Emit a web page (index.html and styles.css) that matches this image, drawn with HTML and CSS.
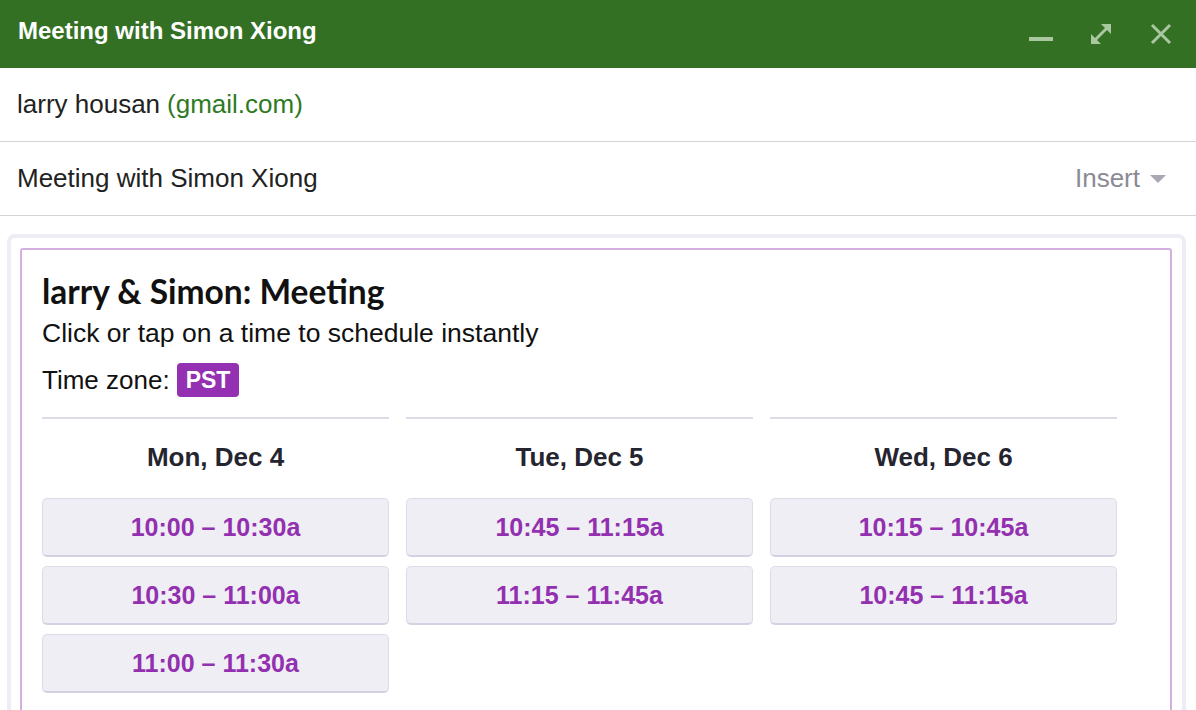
FILE: index.html
```html
<!DOCTYPE html>
<html lang="en">
<head>
    <meta charset="UTF-8">
    <meta name="viewport" content="width=device-width, initial-scale=1.0">
    <title>Meeting with Simon Xiong</title>
    <link rel="stylesheet" href="styles.css">
</head>
<body>

    <div class="compose">
        <div class="titlebar">
            <span class="title">Meeting with Simon Xiong</span>
            <div class="controls">
                <svg class="ctl" width="26" height="26" viewBox="0 0 26 26"><rect x="1" y="16" width="24" height="4" fill="currentColor"/></svg>
                <svg class="ctl" width="26" height="26" viewBox="0 0 26 26">
                    <path d="M6 20 L20 6" stroke="currentColor" stroke-width="3" fill="none"/>
                    <polygon points="13,3 23,3 23,13" fill="currentColor"/>
                    <polygon points="3,13 3,23 13,23" fill="currentColor"/>
                </svg>
                <svg class="ctl" width="26" height="26" viewBox="0 0 26 26"><path d="M4 4 L22 22 M22 4 L4 22" stroke="currentColor" stroke-width="3" fill="none"/></svg>
            </div>
        </div>

        <div class="field">larry housan <span class="domain">(gmail.com)</span></div>

        <div class="field subject">
            <span>Meeting with Simon Xiong</span>
            <span class="insert">Insert <span class="caret"></span></span>
        </div>

        <div class="frame">
            <div class="card">
                <h2>larry &amp; Simon: Meeting</h2>
                <p class="hint">Click or tap on a time to schedule instantly</p>
                <p class="tz">Time zone: <span class="badge">PST</span></p>

                <div class="days">
                    <div class="day">
                        <div class="day-name">Mon, Dec 4</div>
                        <button class="slot">10:00 – 10:30a</button>
                        <button class="slot">10:30 – 11:00a</button>
                        <button class="slot">11:00 – 11:30a</button>
                    </div>
                    <div class="day">
                        <div class="day-name">Tue, Dec 5</div>
                        <button class="slot">10:45 – 11:15a</button>
                        <button class="slot">11:15 – 11:45a</button>
                    </div>
                    <div class="day">
                        <div class="day-name">Wed, Dec 6</div>
                        <button class="slot">10:15 – 10:45a</button>
                        <button class="slot">10:45 – 11:15a</button>
                    </div>
                </div>
            </div>
        </div>
    </div>

</body>
</html>
```

FILE: styles.css
```css
body {
    margin: 0;
    font-family: "Liberation Sans", Arial, sans-serif;
    background-color: #fff;
    color: #222;
    overflow: hidden;
}
.compose {
    height: 710px;
    overflow: hidden;
}
.titlebar {
    height: 68px;
    background-color: #337023;
    display: flex;
    align-items: center;
    justify-content: space-between;
    padding: 0 22px 0 18px;
}
.title {
    color: #fff;
    font-size: 24px;
    font-weight: bold;
    margin-top: -6px;
}
.controls {
    display: flex;
    gap: 34px;
    color: #a9c8a0;
}
.field {
    height: 73px;
    border-bottom: 1px solid #d4d4d4;
    display: flex;
    align-items: center;
    padding: 0 17px;
    font-size: 26px;
    color: #222;
}
.domain {
    color: #2e7a24;
    margin-left: 7px;
}
.subject {
    justify-content: space-between;
    padding-right: 30px;
}
.insert {
    color: #8b8a94;
    display: flex;
    align-items: center;
    gap: 10px;
}
.caret {
    width: 0;
    height: 0;
    border-left: 8px solid transparent;
    border-right: 8px solid transparent;
    border-top: 8px solid #aaa9b1;
}
.frame {
    margin: 18px 10px 0 7px;
    border: 4px solid #eeedf6;
    border-bottom: none;
    border-radius: 8px 8px 0 0;
    padding: 10px 10px 0 9px;
}
.card {
    border: 2px solid #d3b0e0;
    border-bottom: none;
    border-radius: 3px 3px 0 0;
    padding: 21px 20px 20px 20px;
    height: 460px;
}
h2 {
    font-family: Lato, sans-serif;
    font-size: 33.5px;
    line-height: 40px;
    font-weight: bold;
    color: #111;
    margin: 0;
}
.hint {
    font-size: 26.5px;
    line-height: 30px;
    margin: 7px 0 0;
    color: #111;
}
.tz {
    font-size: 26px;
    line-height: 34px;
    margin: 15px 0 0;
    color: #111;
    display: flex;
    align-items: center;
    gap: 7px;
}
.badge {
    background-color: #9430b2;
    color: #fff;
    font-weight: bold;
    font-size: 23px;
    line-height: 34px;
    padding: 0 9px;
    border-radius: 4px;
}
.days {
    display: flex;
    gap: 17px;
    margin-top: 20px;
}
.day {
    width: 347px;
    border-top: 2px solid #dddbe7;
    display: flex;
    flex-direction: column;
    gap: 9px;
}
.day-name {
    text-align: center;
    font-size: 26px;
    line-height: 30px;
    font-weight: bold;
    color: #25252f;
    padding: 23px 0 17px;
}
.slot {
    height: 59px;
    background-color: #efeef4;
    border: 1px solid #dddbe9;
    border-bottom: 2px solid #d4d2e2;
    border-radius: 5px;
    font-family: "Liberation Sans", Arial, sans-serif;
    font-size: 25px;
    font-weight: bold;
    color: #9330b0;
    cursor: pointer;
}
```
